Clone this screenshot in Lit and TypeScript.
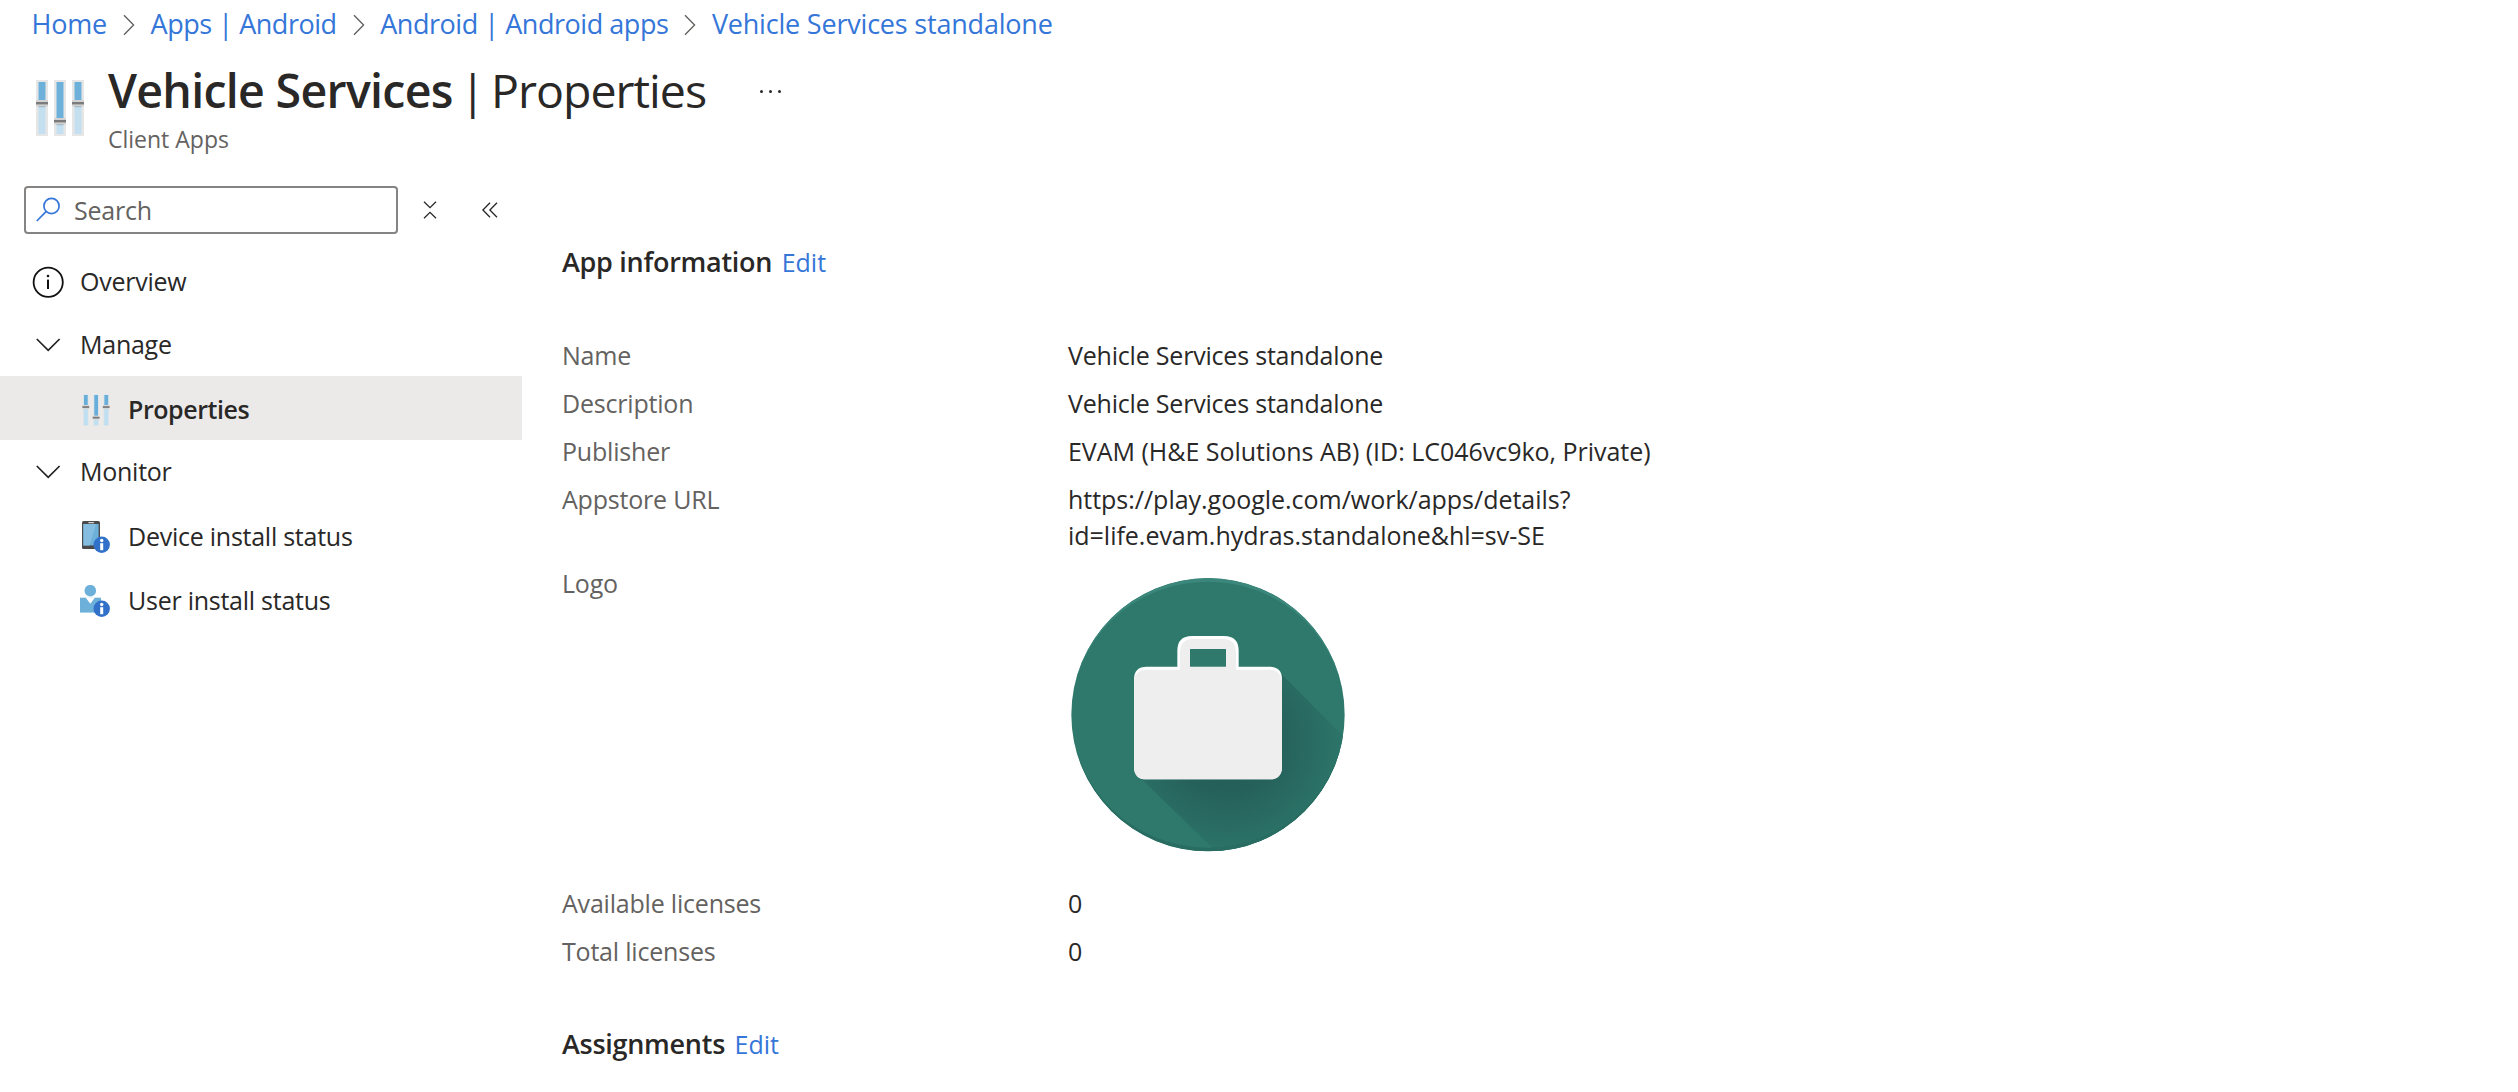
import { LitElement, html, css, svg, nothing, TemplateResult } from "lit";
import { customElement } from "lit/decorators.js";
import { classMap } from "lit/directives/class-map.js";

interface Crumb {
  label: string;
  tight?: boolean;
}

interface NavItem {
  label: string;
  icon: TemplateResult;
  level: "root" | "child";
  selected?: boolean;
}

interface Fact {
  name: string;
  value: string | string[] | TemplateResult;
  snug?: boolean;
}

const infoBadge = (cx: number, cy: number) => svg`
  <circle cx=${cx} cy=${cy} r="8.2" fill="#3271c9"></circle>
  <circle cx=${cx} cy=${cy - 4.3} r="1.7" fill="#fff"></circle>
  <rect x=${cx - 1.5} y=${cy - 1.6} width="3" height="7" fill="#fff"></rect>`;

const crumbChevron = html`
  <svg class="crumb-chevron" width="12" height="22" viewBox="0 0 12 22">
    <path d="M1 1.2 10.6 11 1 20.8" fill="none" stroke="#605e5c" stroke-width="1.3"></path>
  </svg>`;

const slidersLarge = html`
  <svg class="title-icon" width="48" height="56" viewBox="0 0 48 56">
    ${[
      [0, 20],
      [18, 38],
      [36, 20],
    ].map(
      ([x, knob]) => svg`
        <rect x=${x} y="0" width="12" height="56" fill="#e6e6e6"></rect>
        <rect x=${x + 2.5} y="2" width="7" height=${knob} fill="#6db1da"></rect>
        <rect x=${x + 2.5} y=${knob + 2} width="7" height=${52 - knob} fill="#c4dff0"></rect>
        <rect x=${x} y=${knob} width="12" height="6.3" fill="#d2d2d2"></rect>
        <rect x=${x} y=${knob + 2} width="12" height="2.4" fill="#7b7b7b"></rect>
        <rect x=${x + 2.5} y=${knob + 6} width="7" height="1.2" fill="#a9bac5"></rect>`
    )}
  </svg>`;

const slidersSmall = html`
  <svg width="32" height="32" viewBox="0 0 32 32">
    ${[
      [3.3, 11],
      [13.6, 21.6],
      [23.7, 11],
    ].map(
      ([x, knob]) => svg`
        <rect x=${x} y="0.6" width="5" height="31" fill="#d3e0e8"></rect>
        <rect x=${x + 0.7} y="1" width="3.7" height=${knob} fill="#67aedb"></rect>
        <rect x=${x + 0.7} y=${knob + 3} width="3.7" height=${28 - knob} fill="#bfe0f2"></rect>
        <rect x=${x - 0.9} y=${knob} width="6.8" height="4" fill="#d9d9d9"></rect>
        <rect x=${x - 0.9} y=${knob + 1.2} width="6.8" height="1.7" fill="#777"></rect>`
    )}
  </svg>`;

const infoCircle = html`
  <svg width="32" height="32" viewBox="0 0 32 32">
    <circle cx="16.2" cy="16.3" r="14.6" fill="none" stroke="#111" stroke-width="1.8"></circle>
    <circle cx="16" cy="10" r="1.3" fill="#111"></circle>
    <rect x="15" y="13.6" width="2" height="9.4" fill="#111"></rect>
  </svg>`;

const chevronDown = html`
  <svg width="32" height="32" viewBox="0 0 32 32">
    <path d="M4.8 10 16.2 21.4 27.6 10" fill="none" stroke="#222" stroke-width="1.7"></path>
  </svg>`;

const deviceIcon = html`
  <svg width="32" height="32" viewBox="0 0 32 32">
    <rect x="2" y="0" width="18" height="28" rx="1.6" fill="#4a4a4a"></rect>
    <rect x="8.2" y="1" width="6" height="1.2" rx="0.6" fill="#d5d5d5"></rect>
    <rect x="3.4" y="3" width="15.2" height="21.4" fill="#6db1da"></rect>
    <path d="M3.4 3H16L9.6 24.4H3.4Z" fill="#85bde0"></path>
    ${infoBadge(21.7, 23.8)}
  </svg>`;

const userIcon = html`
  <svg width="32" height="32" viewBox="0 0 32 32">
    <path d="M0 12.7H21V27.6H0Z" fill="#6db1da"></path>
    <path d="M5.6 12.4H15L10.3 18.8Z" fill="#fff"></path>
    <circle cx="10.3" cy="5.7" r="5.8" fill="#6db1da"></circle>
    ${infoBadge(21.7, 23.8)}
  </svg>`;

const appLogo = html`
  <svg class="logo" width="276" height="276" viewBox="60 51 828 828">
    <defs>
      <clipPath id="disc"><circle cx="474" cy="464" r="410"></circle></clipPath>
      <radialGradient id="shade" gradientUnits="userSpaceOnUse" cx="530" cy="540" r="370">
        <stop offset="0" stop-color="#225a54"></stop>
        <stop offset="0.4" stop-color="#25605a"></stop>
        <stop offset="1" stop-color="#2d776b"></stop>
      </radialGradient>
    </defs>
    <circle cx="474" cy="464" r="410" fill="#2f796c"></circle>
    <g clip-path="url(#disc)">
      <path d="M686 334 966 614V940H566L262 646Z" fill="url(#shade)"></path>
      <path d="M64 464A410 410 0 0 1 884 464A410 399 0 0 0 64 464Z" fill="#3b877b"></path>
      <path d="M64 464A410 410 0 0 0 884 464A410 399 0 0 1 64 464Z" fill="#296d62"></path>
    </g>
    <path
      fill-rule="evenodd"
      fill="#fff"
      d="M290 320H382V272Q382 228 426 228H522Q566 228 566 272V320H658Q696 320 696 358V620Q696 658 658 658H290Q252 658 252 620V358Q252 320 290 320ZM420 267V320H528V267Z"
    ></path>
    <path
      fill-rule="evenodd"
      fill="#eee"
      d="M290 329H390V278Q390 237 430 237H518Q558 237 558 278V329H658Q690 329 696 360V620Q696 658 658 658H290Q252 658 252 620V360Q258 329 290 329ZM420 267V321H528V267Z"
    ></path>
  </svg>`;

const crumbs: Crumb[] = [
  { label: "Home" },
  { label: "Apps | Android", tight: true },
  { label: "Android | Android apps", tight: true },
  { label: "Vehicle Services standalone" },
];

const navItems: NavItem[] = [
  { label: "Overview", icon: infoCircle, level: "root" },
  { label: "Manage", icon: chevronDown, level: "root" },
  { label: "Properties", icon: slidersSmall, level: "child", selected: true },
  { label: "Monitor", icon: chevronDown, level: "root" },
  { label: "Device install status", icon: deviceIcon, level: "child" },
  { label: "User install status", icon: userIcon, level: "child" },
];

const facts: Fact[] = [
  { name: "Name", value: "Vehicle Services standalone", snug: true },
  { name: "Description", value: "Vehicle Services standalone", snug: true },
  { name: "Publisher", value: "EVAM (H&E Solutions AB) (ID: LC046vc9ko, Private)" },
  {
    name: "Appstore URL",
    value: ["https://play.google.com/work/apps/details?", "id=life.evam.hydras.standalone&hl=sv-SE"],
  },
  { name: "Logo", value: appLogo },
  { name: "Available licenses", value: "0" },
  { name: "Total licenses", value: "0" },
];

@customElement("app-root")
export class AppRoot extends LitElement {
  static styles = css`
    :host {
      display: block;
      height: 1092px;
      overflow: hidden;
      background: #fff;
      color: #292827;
      font-family: "Open Sans", "Noto Sans", sans-serif;
      font-size: 25px;
      line-height: 36px;
    }
    * {
      box-sizing: border-box;
    }
    svg {
      display: block;
      flex: none;
    }
    a {
      color: #3576d9;
      text-decoration: none;
    }
    .crumbs {
      display: flex;
      align-items: center;
      height: 48px;
      padding-left: 31.5px;
      font-size: 27px;
      letter-spacing: -0.2px;
      white-space: nowrap;
    }
    .crumb.tight {
      letter-spacing: -0.46px;
    }
    .crumb-chevron {
      margin: 2px 15.5px 0 16px;
    }
    .header {
      display: flex;
      height: 138px;
      padding-left: 36px;
    }
    .title-icon {
      margin-top: 32px;
    }
    .heading {
      margin-left: 24px;
    }
    .title {
      display: flex;
      height: 70px;
      padding-top: 10px;
      line-height: 64px;
      font-size: 46.5px;
      white-space: nowrap;
    }
    .title-name {
      width: 352px;
      font-weight: 600;
      letter-spacing: -0.7px;
    }
    .title-bar {
      width: 31px;
    }
    .title-page {
      letter-spacing: -1px;
    }
    .subtitle {
      padding-top: 3px;
      font-size: 23px;
      color: #646260;
    }
    .more {
      display: flex;
      gap: 6px;
      margin: 42px 0 0 54px;
    }
    .dot {
      width: 3px;
      height: 3px;
      border-radius: 50%;
      background: #292827;
    }
    .body {
      display: flex;
    }
    .sidebar {
      width: 522px;
      flex: none;
    }
    .tools {
      display: flex;
      align-items: center;
      height: 48px;
      padding-left: 24px;
    }
    .search {
      display: flex;
      align-items: center;
      width: 374px;
      height: 48px;
      padding-left: 10px;
      border: 2px solid #868483;
      border-radius: 4px;
      color: #646260;
      letter-spacing: -0.2px;
    }
    .search-text {
      margin-left: 12px;
    }
    .collapse {
      margin-left: 24px;
    }
    .hide {
      margin-left: 44px;
    }
    .nav {
      padding-top: 16px;
    }
    .nav-item {
      display: flex;
      align-items: center;
      height: 63px;
      padding-left: 32px;
      letter-spacing: -0.25px;
    }
    .nav-item.child {
      height: 64px;
      padding: 3px 0 0 80px;
    }
    .nav-item.selected {
      background: #ebeae9;
      font-weight: 600;
      letter-spacing: -0.45px;
    }
    .nav-label {
      margin: -1px 0 0 16px;
    }
    .content {
      padding: 58px 0 0 40px;
    }
    .section-title {
      display: flex;
      gap: 9.5px;
      height: 36px;
      white-space: nowrap;
    }
    .section-name {
      font-size: 27px;
      font-weight: 600;
      letter-spacing: -0.28px;
    }
    .facts {
      display: grid;
      grid-template-columns: 506px 600px;
      row-gap: 12px;
      padding: 57px 0 57px;
    }
    .fact-name {
      color: #646260;
      letter-spacing: -0.2px;
    }
    .fact-value {
      white-space: nowrap;
      letter-spacing: -0.02px;
    }
    .fact-value.snug {
      letter-spacing: -0.2px;
    }
    .logo {
      margin: 12px 0 20px 2px;
    }
  `;

  private renderValue(value: Fact["value"]) {
    return Array.isArray(value) ? value.map((line) => html`<div>${line}</div>`) : value;
  }

  private renderSectionTitle(name: string) {
    return html`<div class="section-title"><span class="section-name">${name}</span><a>Edit</a></div>`;
  }

  render() {
    return html`
      <nav class="crumbs">
        ${crumbs.map(
          (c, i) => html`${i ? crumbChevron : nothing}<a class=${classMap({ crumb: true, tight: !!c.tight })}>${c.label}</a>`
        )}
      </nav>
      <header class="header">
        ${slidersLarge}
        <div class="heading">
          <div class="title">
            <span class="title-name">Vehicle Services</span>
            <span class="title-bar">|</span>
            <span class="title-page">Properties</span>
          </div>
          <div class="subtitle">Client Apps</div>
        </div>
        <div class="more"><span class="dot"></span><span class="dot"></span><span class="dot"></span></div>
      </header>
      <div class="body">
        <aside class="sidebar">
          <div class="tools">
            <div class="search">
              <svg width="26" height="26" viewBox="0 0 26 26">
                <circle cx="15.5" cy="9" r="7.6" fill="none" stroke="#3576d9" stroke-width="1.7"></circle>
                <path d="M10 14.6 0.8 24" stroke="#3576d9" stroke-width="1.7"></path>
              </svg>
              <span class="search-text">Search</span>
            </div>
            <svg class="collapse" width="16" height="18" viewBox="0 0 16 18">
              <path d="M2 .8 8 6.6 14 .8M2 17.2 8 11.4 14 17.2" fill="none" stroke="#292827" stroke-width="1.3"></path>
            </svg>
            <svg class="hide" width="16" height="16" viewBox="0 0 16 16">
              <path d="M8 .8.9 8 8 15.2M15 .8 7.9 8 15 15.2" fill="none" stroke="#292827" stroke-width="1.3"></path>
            </svg>
          </div>
          <div class="nav">
            ${navItems.map(
              (n) => html`
                <div class=${classMap({ "nav-item": true, child: n.level === "child", selected: !!n.selected })}>
                  ${n.icon}<span class="nav-label">${n.label}</span>
                </div>`
            )}
          </div>
        </aside>
        <main class="content">
          ${this.renderSectionTitle("App information")}
          <div class="facts">
            ${facts.map(
              (f) => html`
                <div class="fact-name">${f.name}</div>
                <div class=${classMap({ "fact-value": true, snug: !!f.snug })}>${this.renderValue(f.value)}</div>`
            )}
          </div>
          ${this.renderSectionTitle("Assignments")}
        </main>
      </div>
    `;
  }
}
